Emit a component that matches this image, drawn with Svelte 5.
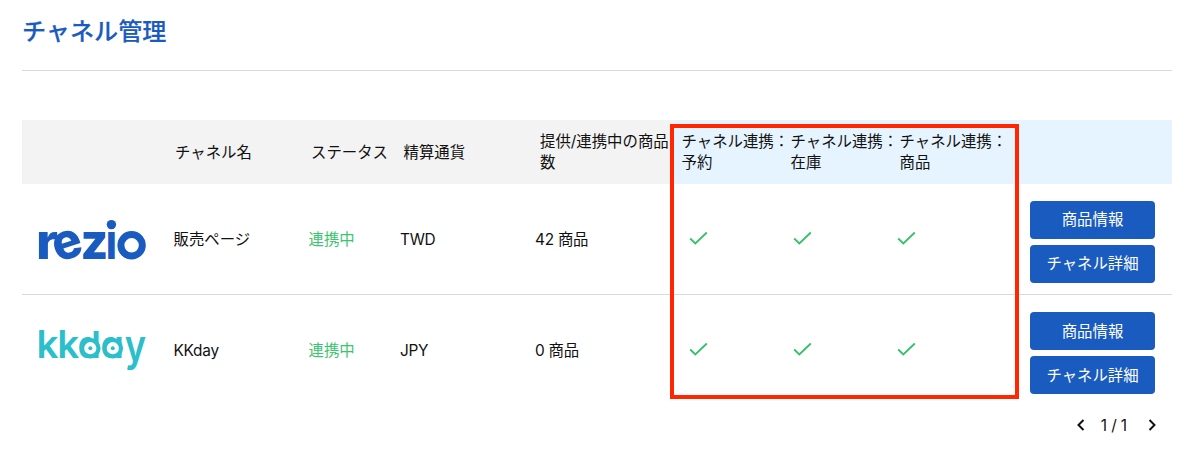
<script>
  const channels = [
    { id: 'rezio', name: '販売ページ', status: '連携中', currency: 'TWD', count: 42 },
    { id: 'kkday', name: 'KKday', status: '連携中', currency: 'JPY', count: 0 }
  ];

  const links = ['予約', '在庫', '商品'];
  let page = 1;
  const pages = 1;

  const movePage = (step) => () => {
    page = Math.min(pages, Math.max(1, page + step));
  };
</script>

<style>
  :global(body) {
    background: #fff;
  }

  .page {
    box-sizing: border-box;
    width: 1189px;
    height: 459px;
    padding: 0 17px 0 22px;
    overflow: hidden;
    font-family: Inter, 'Noto Sans CJK JP', sans-serif;
    font-size: 15.4px;
    line-height: 21px;
    color: #111;
  }

  h1 {
    box-sizing: border-box;
    height: 71px;
    margin: 0 0 49px;
    padding-top: 14px;
    border-bottom: 1px solid #d9d9d9;
    color: #1a5bbf;
    font-size: 24.1px;
    font-weight: 500;
    line-height: 36px;
    -webkit-text-stroke: 0.2px #1a5bbf;
  }

  .table {
    position: relative;
  }

  .head,
  .row {
    display: grid;
    align-items: center;
  }

  .head {
    grid-template-columns: 153px 136px 92.5px 136.5px 134px 498px;
    height: 64px;
    background: #f3f3f3;
  }

  .head-links {
    display: grid;
    grid-template-columns: 109px 109px 109px;
    align-items: center;
    box-sizing: border-box;
    height: 64px;
    padding-left: 7.5px;
    background: #e6f4ff;
  }

  .row {
    grid-template-columns: 151.5px 135px 91.5px 135px 154px 104px 104px 133px 125px;
    height: 110px;
  }

  .row + .row {
    border-top: 1px solid #d9d9d9;
  }

  .logo {
    display: block;
    width: 140px;
    height: 60px;
    overflow: visible;
  }

  .logo text {
    font-family: Inter, sans-serif;
    font-weight: 800;
    line-height: 1;
  }

  .logo circle.ring {
    fill: #fff;
    stroke-width: 4.2;
  }

  .logo--rezio {
    fill: #1a5bbf;
  }

  .logo--rezio circle.ring {
    stroke: #1a5bbf;
    stroke-width: 7;
  }

  .logo--kkday {
    fill: #2bbfcb;
  }

  .logo--kkday text {
    font-weight: 600;
    font-feature-settings: 'cv11';
  }

  .logo--kkday circle.ring {
    stroke: #2bbfcb;
  }

  .status {
    color: #3cc46f;
  }

  .latin {
    letter-spacing: -0.25px;
  }

  .check {
    display: block;
    width: 20px;
    height: 16px;
    fill: none;
    stroke: #36c06a;
    stroke-width: 1.8;
  }

  .actions {
    display: flex;
    flex-direction: column;
    gap: 6px;
    padding-top: 6px;
  }

  button {
    padding: 0;
    border: 0;
    font: inherit;
    cursor: pointer;
  }

  .actions button {
    height: 38px;
    padding-bottom: 1px;
    border-radius: 4px;
    background: #1a5bbf;
    color: #fff;
  }

  .row + .row .actions button {
    padding-bottom: 0;
  }

  .highlight {
    position: absolute;
    top: 4px;
    left: 648px;
    box-sizing: border-box;
    width: 349px;
    height: 275px;
    border: 4px solid #ff2600;
    pointer-events: none;
  }

  .pager {
    display: flex;
    align-items: center;
    justify-content: flex-end;
    padding: 9px 14px 0 0;
  }

  .pager span {
    margin: 1px 19px 0 14px;
    letter-spacing: -0.1px;
  }

  .pager button {
    width: 12px;
    height: 20px;
    background: none;
  }

  .pager svg {
    display: block;
    width: 12px;
    height: 20px;
    fill: none;
    stroke: #111;
    stroke-width: 2;
  }
</style>

<div class="page">
  <h1>チャネル管理</h1>

  <div class="table">
    <div class="head">
      <div></div>
      <div>チャネル名</div>
      <div>ステータス</div>
      <div>精算通貨</div>
      <div>提供/連携中の商品数</div>
      <div class="head-links">
        {#each links as link}
          <div>チャネル連携：<br />{link}</div>
        {/each}
      </div>
    </div>

    {#each channels as channel (channel.id)}
      <div class="row">
        {#if channel.id === 'rezio'}
          <svg class="logo logo--rezio" viewBox="0 0 140 60">
            <text transform="translate(14 50) scale(1.05 1)" font-size="50">r</text>
            <text transform="translate(35.6 53.4) rotate(-18) scale(0.98 1)" font-size="50">e</text>
            <text transform="translate(58.6 50) scale(0.96 1)" font-size="50">z</text>
            <text transform="translate(84 50) scale(0.76 1)" font-size="50">i</text>
            <text transform="translate(95 50) scale(0.88 1)" font-size="50">o</text>
            <circle cx="89.4" cy="15.6" r="4.7" />
            <circle class="ring" cx="109.6" cy="36.3" r="10.7" />
          </svg>
        {:else}
          <svg class="logo logo--kkday" viewBox="0 0 140 60">
            <text x="14.5 35.3" y="38.2" font-size="38.5">kk</text>
            <text x="55.5 78.5" y="38.2" font-size="37.5">da</text>
            <text transform="translate(102.8 40.5) scale(0.98 1.2)" font-size="37">y</text>
            <circle class="ring" cx="68.3" cy="28.2" r="8.2" />
            <circle class="ring" cx="90.8" cy="28.2" r="8.2" />
            <circle cx="68.3" cy="28.2" r="2" />
            <circle cx="90.8" cy="28.2" r="2" />
          </svg>
        {/if}
        <div class:latin={channel.id === 'kkday'}>{channel.name}</div>
        <div class="status">{channel.status}</div>
        <div class="latin">{channel.currency}</div>
        <div class="latin">{channel.count} 商品</div>
        {#each links as link}
          <svg class="check" viewBox="0 0 20 16">
            <path d="M1.2 7.5 L6.3 12.5 L17.8 1.5" />
          </svg>
        {/each}
        <div class="actions">
          <button>商品情報</button>
          <button>チャネル詳細</button>
        </div>
      </div>
    {/each}

    <div class="highlight"></div>
  </div>

  <div class="pager">
    <button aria-label="前へ" on:click={movePage(-1)}>
      <svg viewBox="0 0 12 20"><path d="M8.5 5 L3.5 10 L8.5 15" /></svg>
    </button>
    <span>{page} / {pages}</span>
    <button aria-label="次へ" on:click={movePage(1)}>
      <svg viewBox="0 0 12 20"><path d="M3.5 5 L8.5 10 L3.5 15" /></svg>
    </button>
  </div>
</div>
